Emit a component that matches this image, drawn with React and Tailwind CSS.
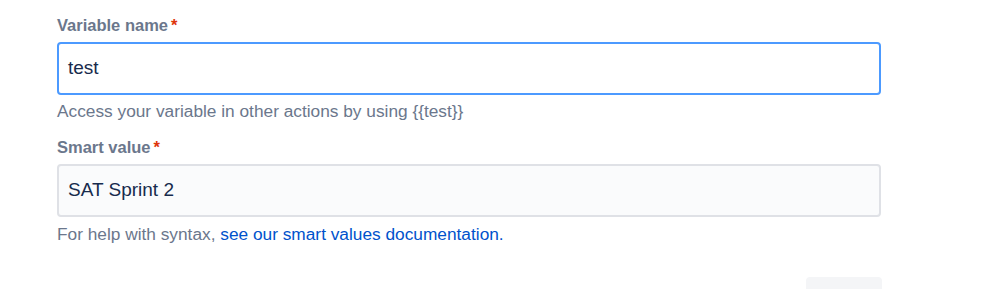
export default function App() {
  const font = { fontFamily: '"Liberation Sans", Arial, sans-serif' };
  return (
    <div className="w-[998px] h-[289px] bg-white overflow-hidden" style={font}>
      <div className="pl-[57px] w-[882px] pt-[14px]">
        <div className="flex items-center h-[22px] text-[16.5px] font-bold text-[#6B778C]">
          Variable name<span className="text-[#DE350B] ml-[3px]">*</span>
        </div>
        <div className="mt-[6px] mr-px h-[53px] border-2 border-[#4C9AFF] rounded-[4px] bg-white flex items-center pl-[9px] text-[19px] text-[#172B4D]">
          test
        </div>
        <div className="mt-[7px] h-[20px] flex items-center text-[17.3px] text-[#6B778C]">
          Access your variable in other actions by using {"{{test}}"}
        </div>
        <div className="mt-[14px] flex items-center h-[22px] text-[16.5px] font-bold text-[#6B778C]">
          Smart value<span className="text-[#DE350B] ml-[3px]">*</span>
        </div>
        <div className="mt-[6px] mr-px h-[53px] border-2 border-[#DFE1E6] rounded-[4px] bg-[#FAFBFC] flex items-center pl-[9px] text-[19px] text-[#172B4D]">
          SAT Sprint 2
        </div>
        <div className="mt-[8px] h-[20px] flex items-center text-[17.3px] text-[#6B778C]">
          For help with syntax,&nbsp;<span className="text-[#0052CC]">see our smart values documentation.</span>
        </div>
        <div className="flex justify-end mt-[32px]">
          <div className="w-[76px] h-[30px] rounded-[4px] bg-[#F4F5F7]"></div>
        </div>
      </div>
    </div>
  );
}
